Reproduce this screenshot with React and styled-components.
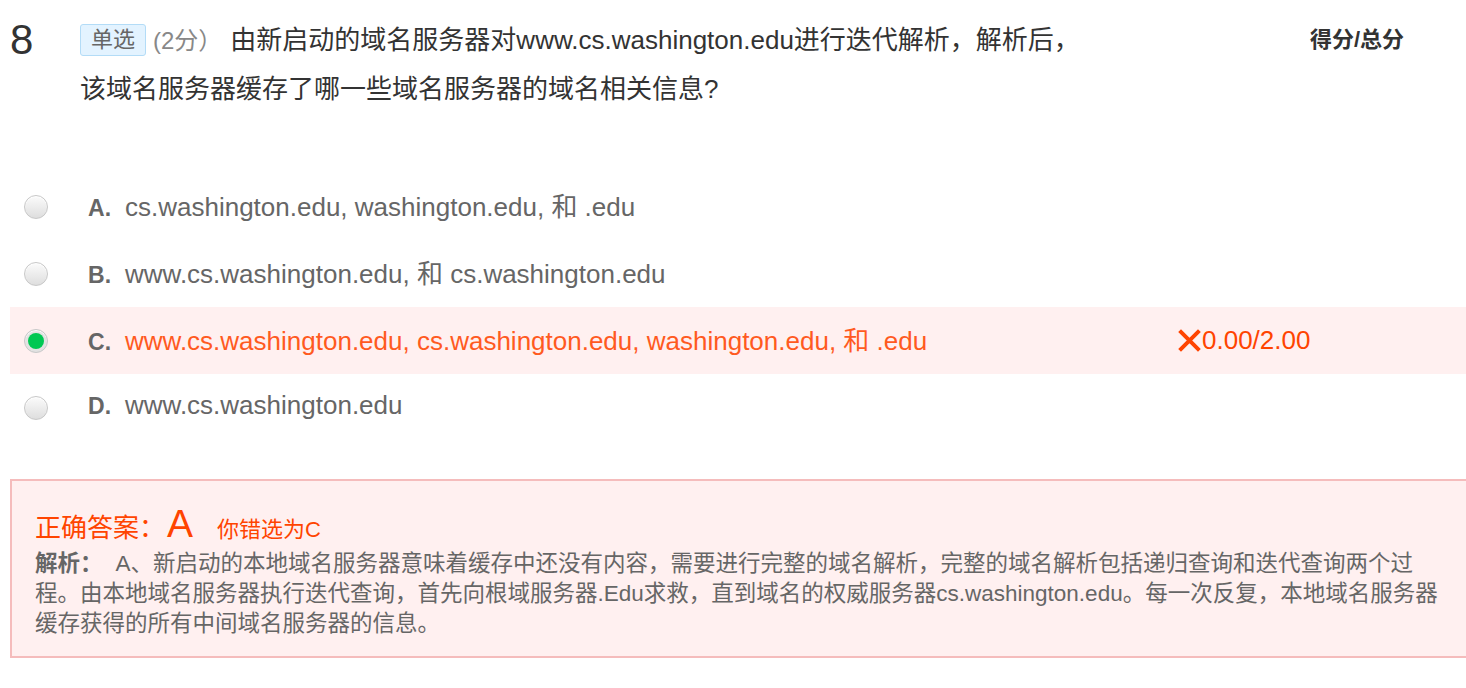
import React from "react";
import styled, { createGlobalStyle, css } from "styled-components";

const Global = createGlobalStyle`
  html, body {
    margin: 0;
    padding: 0;
    background: #fff;
    overflow: hidden;
  }
  body {
    font-family: "Liberation Sans", Arial, "Noto Sans CJK SC", sans-serif;
  }
`;

const Page = styled.div`
  width: 1490px;
  padding: 16px 0 0 10px;
`;

const Head = styled.div`
  display: grid;
  grid-template-columns: 70px 1015px 1fr;
  align-items: start;
`;

const Num = styled.div`
  font-size: 42px;
  color: #333;
  line-height: 48px;
`;

const Title = styled.div`
  font-size: 26px;
  line-height: 48px;
  color: #333;
`;

const Tag = styled.span`
  display: inline-block;
  vertical-align: top;
  margin-top: 8px;
  font-size: 22px;
  line-height: 30px;
  padding: 0 10px;
  color: #666;
  background: #e3f3ff;
  border: 1px solid #b3dcf7;
  border-radius: 3px;
  margin-right: 7px;
`;

const Pts = styled.span`
  color: #888;
  font-size: 24px;
  margin-right: 8px;
`;

const ScoreHead = styled.div`
  font-size: 22px;
  font-weight: bold;
  color: #333;
  line-height: 48px;
  padding-left: 215px;
`;

const Options = styled.div`
  margin-top: 60px;
`;

const Row = styled.div`
  display: grid;
  grid-template-columns: 78px 1089px 1fr;
  align-items: center;
  height: 67px;
  ${p =>
    p.wrong &&
    css`
      background: #fff0f0;
    `}
`;

const Radio = styled.span`
  width: 22px;
  height: 22px;
  margin-left: 14px;
  border-radius: 50%;
  border: 1px solid #c8c8c8;
  background: linear-gradient(#fbfbfb, #dedede);
  box-shadow: inset 0 1px 1px #fff;
  display: flex;
  align-items: center;
  justify-content: center;
  ${p =>
    p.checked &&
    css`
      background: #e2e2e2;
      &::after {
        content: "";
        width: 16px;
        height: 16px;
        border-radius: 50%;
        background: #00c853;
      }
    `}
`;

const Choice = styled.div`
  display: flex;
  align-items: baseline;
  margin-top: -5px;
`;

const Letter = styled.span`
  width: 37px;
  font-size: 23px;
  font-weight: bold;
  color: #666;
`;

const OptText = styled.span`
  font-size: 26px;
  color: ${p => (p.wrong ? "#ff5a1f" : "#666")};
`;

const Score = styled.span`
  font-size: 26px;
  color: #ff4400;
  display: flex;
  align-items: center;
`;

const Cross = styled.svg`
  width: 25px;
  height: 25px;
`;

const Answer = styled.div`
  margin-top: 38px;
  border: 2px solid #f5bcbc;
  background: #fff0f0;
  padding: 23px 41px 17px 23px;
  width: 1480px;
  box-sizing: border-box;
`;

const Correct = styled.div`
  color: #ff4400;
  font-size: 26px;
  line-height: 40px;
  height: 40px;
  display: flex;
  align-items: baseline;
`;

const Big = styled.span`
  font-size: 39px;
  margin: 0 24px 0 2px;
`;

const Small = styled.span`
  font-size: 22px;
`;

const Analysis = styled.div`
  font-size: 22.5px;
  line-height: 30px;
  color: #666;
  margin-top: 5px;
`;

const Label = styled.b`
  color: #666;
  margin-right: 13px;
`;

const options = [
  { k: "A", t: "cs.washington.edu, washington.edu, 和 .edu" },
  { k: "B", t: "www.cs.washington.edu, 和 cs.washington.edu" },
  {
    k: "C",
    t: "www.cs.washington.edu, cs.washington.edu, washington.edu, 和 .edu",
    wrong: true
  },
  { k: "D", t: "www.cs.washington.edu" }
];

export default function App() {
  return (
    <Page>
      <Global />
      <Head>
        <Num>8</Num>
        <Title>
          <Tag>单选</Tag>
          <Pts>(2分）</Pts>
          由新启动的域名服务器对www.cs.washington.edu进行迭代解析，解析后，该域名服务器缓存了哪一些域名服务器的域名相关信息?
        </Title>
        <ScoreHead>得分/总分</ScoreHead>
      </Head>
      <Options>
        {options.map(o => (
          <Row key={o.k} wrong={o.wrong}>
            <Radio checked={o.wrong} />
            <Choice>
              <Letter>{o.k}.</Letter>
              <OptText wrong={o.wrong}>{o.t}</OptText>
            </Choice>
            {o.wrong && (
              <Score>
                <Cross viewBox="0 0 24 24">
                  <path
                    d="M2.5 2.5 L21.5 21.5 M21.5 2.5 L2.5 21.5"
                    stroke="#ff4400"
                    strokeWidth="3.8"
                  />
                </Cross>
                0.00/2.00
              </Score>
            )}
          </Row>
        ))}
      </Options>
      <Answer>
        <Correct>
          正确答案：<Big>A</Big>
          <Small>你错选为C</Small>
        </Correct>
        <Analysis>
          <Label>解析：</Label>
          A、新启动的本地域名服务器意味着缓存中还没有内容，需要进行完整的域名解析，完整的域名解析包括递归查询和迭代查询两个过程。由本地域名服务器执行迭代查询，首先向根域服务器.Edu求救，直到域名的权威服务器cs.washington.edu。每一次反复，本地域名服务器缓存获得的所有中间域名服务器的信息。
        </Analysis>
      </Answer>
    </Page>
  );
}
